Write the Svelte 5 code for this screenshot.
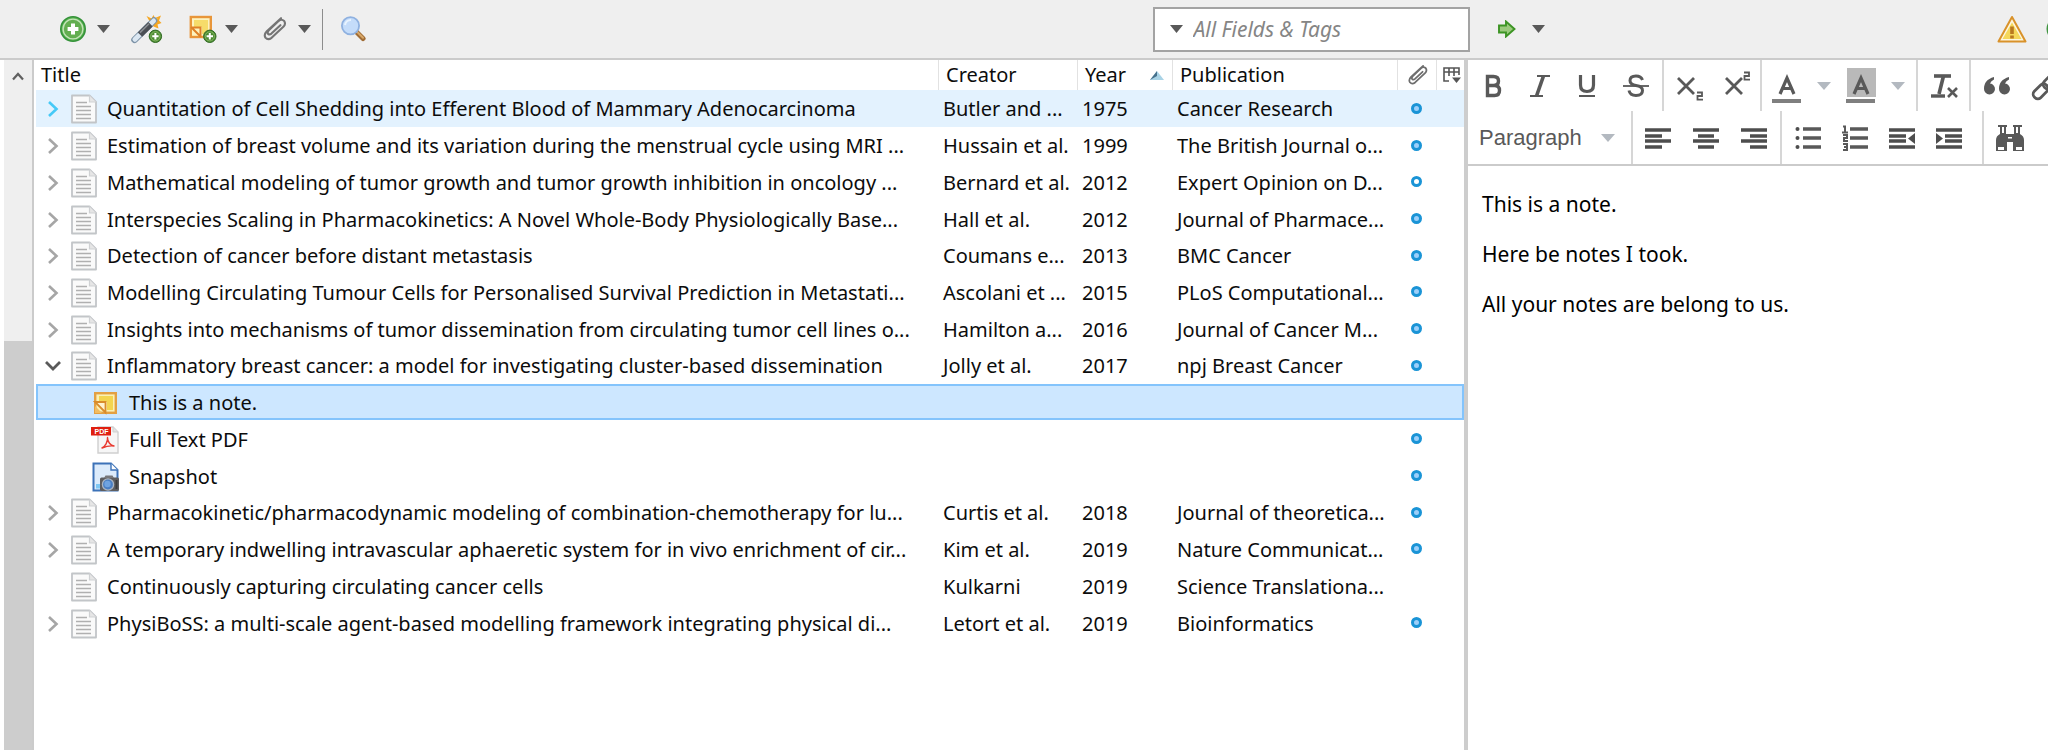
<script>
  const entries = [
    { title: 'Quantitation of Cell Shedding into Efferent Blood of Mammary Adenocarcinoma', creator: 'Butler and ...', year: '1975', pub: 'Cancer Research', kind: 'doc', twisty: 'closed', dot: 'full', state: 'hover' },
    { title: 'Estimation of breast volume and its variation during the menstrual cycle using MRI ...', creator: 'Hussain et al.', year: '1999', pub: 'The British Journal o...', kind: 'doc', twisty: 'closed', dot: 'full' },
    { title: 'Mathematical modeling of tumor growth and tumor growth inhibition in oncology ...', creator: 'Bernard et al.', year: '2012', pub: 'Expert Opinion on D...', kind: 'doc', twisty: 'closed', dot: 'empty' },
    { title: 'Interspecies Scaling in Pharmacokinetics: A Novel Whole-Body Physiologically Base...', creator: 'Hall et al.', year: '2012', pub: 'Journal of Pharmace...', kind: 'doc', twisty: 'closed', dot: 'full' },
    { title: 'Detection of cancer before distant metastasis', creator: 'Coumans e...', year: '2013', pub: 'BMC Cancer', kind: 'doc', twisty: 'closed', dot: 'full' },
    { title: 'Modelling Circulating Tumour Cells for Personalised Survival Prediction in Metastati...', creator: 'Ascolani et ...', year: '2015', pub: 'PLoS Computational...', kind: 'doc', twisty: 'closed', dot: 'full' },
    { title: 'Insights into mechanisms of tumor dissemination from circulating tumor cell lines o...', creator: 'Hamilton a...', year: '2016', pub: 'Journal of Cancer M...', kind: 'doc', twisty: 'closed', dot: 'full' },
    { title: 'Inflammatory breast cancer: a model for investigating cluster-based dissemination', creator: 'Jolly et al.', year: '2017', pub: 'npj Breast Cancer', kind: 'doc', twisty: 'open', dot: 'full' },
    { title: 'This is a note.', kind: 'note', state: 'selected' },
    { title: 'Full Text PDF', kind: 'pdf', dot: 'full' },
    { title: 'Snapshot', kind: 'snapshot', dot: 'full' },
    { title: 'Pharmacokinetic/pharmacodynamic modeling of combination-chemotherapy for lu...', creator: 'Curtis et al.', year: '2018', pub: 'Journal of theoretica...', kind: 'doc', twisty: 'closed', dot: 'full' },
    { title: 'A temporary indwelling intravascular aphaeretic system for in vivo enrichment of cir...', creator: 'Kim et al.', year: '2019', pub: 'Nature Communicat...', kind: 'doc', twisty: 'closed', dot: 'full' },
    { title: 'Continuously capturing circulating cancer cells', creator: 'Kulkarni', year: '2019', pub: 'Science Translationa...', kind: 'doc' },
    { title: 'PhysiBoSS: a multi-scale agent-based modelling framework integrating physical di...', creator: 'Letort et al.', year: '2019', pub: 'Bioinformatics', kind: 'doc', twisty: 'closed', dot: 'full' }
  ];
  let search = $state('');
</script>

{#snippet caret()}
  <svg class="caret" width="13" height="8" viewBox="0 0 12 8" preserveAspectRatio="none" aria-hidden="true"><path d="M0 0h12L6 8z" fill="currentColor" /></svg>
{/snippet}

{#snippet plusBadge(x, y)}
  <g transform="translate({x} {y})">
    <circle r="6.2" fill="#4d8a33" stroke="#2f6a22" stroke-width="1" />
    <circle r="4.6" fill="none" stroke="#82b862" stroke-width="1" />
    <path d="M-3.2 0h6.4M0 -3.2v6.4" stroke="#fff" stroke-width="2" />
  </g>
{/snippet}

{#snippet clip(color)}
  <g fill="none" stroke={color} stroke-width="2.1" stroke-linecap="round" stroke-linejoin="round">
    <path d="M19 2.2 L4.8 15.2 Q1.6 18.5 3.4 21.6 Q6 24.6 9.6 21.8 L21.6 10.6 Q24 7.8 22.2 5 Q19.6 2.6 16.8 4.8 L6.6 14.6 Q5 16.6 6.2 18 Q7.8 19 9.4 17.6 L18.4 9.2" />
  </g>
{/snippet}

<div class="app">
  <header class="toolbar">
    <div class="tools">
      <button class="tool add" aria-label="New Item">
        <svg width="28" height="28" viewBox="0 0 28 28">
          <circle cx="14" cy="14" r="12.2" fill="#5cb352" stroke="#35933a" stroke-width="1.6" />
          <circle cx="14" cy="14" r="9.9" fill="#63ae50" stroke="#c3e3b8" stroke-width="1.4" />
          <path d="M14 8.6v10.8M8.6 14h10.8" stroke="#fff" stroke-width="4" />
        </svg>
        {@render caret()}
      </button>
      <button class="tool wand" aria-label="Add Item by Identifier">
        <svg width="32" height="30" viewBox="0 0 32 30">
          <path d="M19 8l-3.500 -6 5 2.500 2-3.500 1.500 3 6-2.500-2 5 2.500 2.500-4 1.500 1 4-5-2z" fill="#f6a723" />
          <path d="M20.500 5l3 1 3-2-1 4-3 2z" fill="#ffe45c" />
          <path d="M3.500 25.800L23 6.500" stroke="#7e94a8" stroke-width="6.600" stroke-linecap="round" />
          <path d="M3.800 25.500L22.700 6.800" stroke="#dbe7f2" stroke-width="4.600" stroke-linecap="round" />
          <path d="M9 20.600L19.500 10.200" stroke="#4b4f55" stroke-width="6.200" />
          <path d="M9 18.600L18 9.700" stroke="#8b8f95" stroke-width="1.500" />
          {@render plusBadge(24.4, 22.3)}
        </svg>
      </button>
      <button class="tool note" aria-label="New Note">
        <svg width="28" height="28" viewBox="0 0 28 28">
          <rect x="1.800" y="2" width="20" height="20" fill="#fdf3bf" stroke="#e8963a" stroke-width="2.400" />
          <path d="M5 5h14v14h-6v-7H5z" fill="#f6dc6a" />
          <path d="M2 12l10 10M3 12.500h8.500V22" fill="none" stroke="#de8128" stroke-width="2" />
          {@render plusBadge(20.8, 21.3)}
        </svg>
        {@render caret()}
      </button>
      <button class="tool attach" aria-label="Add Attachment">
        <svg width="26" height="26" viewBox="0 0 26 26">{@render clip('#757575')}</svg>
        {@render caret()}
      </button>
      <span class="rule"></span>
      <button class="tool lens" aria-label="Advanced Search">
        <svg width="26" height="26" viewBox="0 0 26 26">
          <path d="M16.500 16l6.500 6.500" stroke="#a06c35" stroke-width="5" stroke-linecap="round" />
          <path d="M17 15.800l6 6" stroke="#d8a869" stroke-width="2" stroke-linecap="round" />
          <circle cx="10.500" cy="9.800" r="8.600" fill="#c4dcfa" stroke="#8fb1e0" stroke-width="1.800" />
          <path d="M5 9a6 6 0 0 1 6-5" fill="none" stroke="#e8f3ff" stroke-width="2" />
        </svg>
      </button>
    </div>
    <div class="search">
      <button aria-label="Search mode">{@render caret()}</button>
      <input type="text" placeholder="All Fields &amp; Tags" aria-label="All Fields &amp; Tags" bind:value={search} />
    </div>
    <button class="tool locate" aria-label="Locate">
      <svg width="18" height="18" viewBox="0 0 18 18"><path d="M1 5.500h7V1.500L16.500 9 8 16.500v-4H1z" fill="#9aca7c" stroke="#3c9424" stroke-width="1.900" /></svg>
      {@render caret()}
    </button>
    <div class="status">
      <button class="tool" aria-label="Sync warning">
        <svg width="30" height="28" viewBox="0 0 30 28">
          <path d="M15 2L28.500 26.500H1.500z" fill="#fdf6df" stroke="#d9922a" stroke-width="2" stroke-linejoin="round" />
          <path d="M15 7.500L24.500 24H5.500z" fill="#f5d75a" />
          <path d="M15 11.500v7.500M15 20.500v3" stroke="#b9781f" stroke-width="3.600" />
        </svg>
      </button>
      <button class="tool sync" aria-label="Sync">
        <svg width="26" height="26" viewBox="0 0 26 26"><circle cx="13" cy="13" r="10.500" fill="none" stroke="#3f9440" stroke-width="4" /></svg>
      </button>
    </div>
  </header>

  <main>
    <div class="scroll" aria-hidden="true">
      <svg width="12" height="10" viewBox="0 0 12 10"><path d="M1 8.500L6 3l5 5.500" fill="none" stroke="#606060" stroke-width="2.200" /></svg>
      <span class="thumb"></span>
    </div>

    <section class="items">
      <table>
        <colgroup><col /><col class="c-creator" /><col class="c-year" /><col class="c-pub" /><col class="c-att" /><col class="c-pick" /></colgroup>
        <thead>
          <tr>
            <th class="first">Title</th>
            <th>Creator</th>
            <th>
              <span class="sorted">Year
                <svg width="14" height="9" viewBox="0 0 14 9"><path d="M0 9L7 0l7 9z" fill="#a9d3e6" /><path d="M0 9L7 0v5z" fill="#47718c" /></svg>
              </span>
            </th>
            <th>Publication</th>
            <th class="icon" aria-label="Attachment"><svg width="22" height="22" viewBox="0 0 26 26">{@render clip('#6d6d6d')}</svg></th>
            <th class="icon" aria-label="Choose columns">
              <svg width="20" height="18" viewBox="0 0 20 18"><path d="M7 15H2V2h15v7M2 6h15M7 2v8M12 2v8" fill="none" stroke="#555" stroke-width="1.600" /><path d="M10 11.500h9L14.500 17z" fill="#555" /></svg>
            </th>
          </tr>
        </thead>
        <tbody>
          {#each entries as e}
            <tr class={e.state}>
              <td>
                <div class="title" class:child={e.kind !== 'doc'}>
                  {#if e.kind === 'doc'}
                    <span class="twisty">
                      {#if e.twisty === 'closed'}
                        <svg width="17" height="18" viewBox="0 0 17 18"><path d="M5 2l7.500 7L5 16" fill="none" stroke={e.state === 'hover' ? '#45c9f7' : '#a6a6a6'} stroke-width="2.600" /></svg>
                      {:else if e.twisty === 'open'}
                        <svg width="17" height="18" viewBox="0 0 17 18"><path d="M2 5l7 7 7-7" fill="none" stroke="#5a5a5a" stroke-width="2.800" /></svg>
                      {/if}
                    </span>
                    <svg class="kind" width="28" height="30" viewBox="0 0 28 30">
                      <path d="M2 1.500h17.500L26 8v20.500H2z" fill="#fafafa" stroke="#c2c5c8" stroke-width="1.800" stroke-linejoin="round" />
                      <path d="M19.500 1.500V8H26" fill="#e6e6e6" stroke="#cfd1d3" stroke-width="1.200" />
                      <path d="M6 8.500h11M6 12.500h15M6 16.500h15M6 20.500h15M6 24.500h15" stroke="#b0b0b0" stroke-width="1.600" />
                    </svg>
                  {:else if e.kind === 'note'}
                    <svg class="kind" width="28" height="30" viewBox="0 0 28 30">
                      <rect x="4.200" y="5.200" width="20.600" height="19.600" fill="#fbf0b4" stroke="#e3a043" stroke-width="2.400" />
                      <path d="M8 8h14v14h-6v-8H8z" fill="#f3d550" />
                      <path d="M4 14h10.500v10.500z" fill="#fff3cf" stroke="#d98c2b" stroke-width="1.800" />
                      <path d="M4 18v7h7z" fill="#f2bd62" />
                    </svg>
                  {:else if e.kind === 'pdf'}
                    <svg class="kind" width="28" height="30" viewBox="0 0 28 30">
                      <path d="M7 2h15l5 5v21H7z" fill="#f6f6f6" stroke="#cfcfcf" stroke-width="1.400" />
                      <path d="M22 2v5h5" fill="#e2e2e2" stroke="#cfcfcf" />
                      <rect x="0" y="2" width="20" height="8.500" fill="#e01f10" />
                      <text x="3.500" y="9" font-size="7" font-weight="700" fill="#fff">PDF</text>
                      <path d="M11 23c3-1.500 6-6 5.500-10.500 0 4.500 3 8 6.500 8.500-4-.5-8 .3-12 2z" fill="none" stroke="#e8392f" stroke-width="1.400" stroke-linejoin="round" />
                    </svg>
                  {:else}
                    <svg class="kind" width="28" height="30" viewBox="0 0 28 30">
                      <path d="M2.500 1.500H20L26.500 8v20.500h-24z" fill="#dcebfb" stroke="#3c72b8" stroke-width="2" />
                      <path d="M20 1.500V8h6.500" fill="#fff" stroke="#3c72b8" stroke-width="1.400" />
                      <rect x="5" y="22" width="4.500" height="4.500" fill="#7fc8f4" />
                      <rect x="9" y="15.500" width="19" height="13.500" rx="1.500" fill="#5e5e60" />
                      <path d="M13 16l1.500-2.500h7L23 16z" fill="#77777a" />
                      <circle cx="17" cy="22.500" r="5.600" fill="#4a7fc4" stroke="#a9b4c2" stroke-width="1.300" />
                      <circle cx="16.500" cy="22" r="3.200" fill="#6fa3e0" />
                      <path d="M25.500 18v9" stroke="#3c3c3c" stroke-width="2" />
                    </svg>
                  {/if}
                  <span>{e.title}</span>
                </div>
              </td>
              <td>{e.creator ?? ''}</td>
              <td>{e.year ?? ''}</td>
              <td>{e.pub ?? ''}</td>
              <td class="mark">{#if e.dot}<span class="dot {e.dot}"></span>{/if}</td>
              <td></td>
            </tr>
          {/each}
        </tbody>
      </table>
    </section>

    <section class="editor">
      <div class="format">
        <div class="line">
          <div class="group g1">
            <button aria-label="Bold"><svg width="24" height="28" viewBox="0 0 24 28"><path d="M6.500 4.500h6q5 0 5 4.500t-5 4.500h-6zM6.500 13.500h7q5 0 5 5t-5 5h-7z" fill="none" stroke="#595959" stroke-width="3.400" /></svg></button>
            <button aria-label="Italic"><svg width="24" height="28" viewBox="0 0 24 28"><path d="M9 4h13M2 24h13" stroke="#595959" stroke-width="2" /><path d="M15.500 4L8.500 24" stroke="#595959" stroke-width="3.600" /></svg></button>
            <button aria-label="Underline"><svg width="24" height="28" viewBox="0 0 24 28"><path d="M5.500 3v10q0 6.500 6.500 6.500t6.500-6.500V3" fill="none" stroke="#595959" stroke-width="3.200" /><path d="M4 24h16" stroke="#595959" stroke-width="2" /></svg></button>
            <button aria-label="Strikethrough"><svg width="28" height="28" viewBox="0 0 28 28"><path d="M20.500 8q-1.500-4-6.500-4-6 0-6 4.500 0 4 6 5 6.500 1 6.500 5 0 5-6.500 5-6 0-7-5" fill="none" stroke="#595959" stroke-width="3" /><path d="M1 14h26" stroke="#595959" stroke-width="1.800" /></svg></button>
          </div>
          <div class="group g2">
            <button aria-label="Subscript"><svg width="28" height="30" viewBox="0 0 28 30"><path d="M2 7l16 16M18 7L2 23" stroke="#595959" stroke-width="2.800" /><path d="M21 21.500h5v3.500h-4.500v3.700H27" fill="none" stroke="#595959" stroke-width="1.800" /></svg></button>
            <button aria-label="Superscript"><svg width="28" height="30" viewBox="0 0 28 30"><path d="M2 7l16 16M18 7L2 23" stroke="#595959" stroke-width="2.800" /><path d="M20 1.500h5v3.500h-4.500v3.700H26" fill="none" stroke="#595959" stroke-width="1.800" /></svg></button>
          </div>
          <div class="group g3">
            <button aria-label="Text color"><svg width="30" height="36" viewBox="0 0 30 36"><path d="M8 26L15 10l7 16M10.500 20.500h9" fill="none" stroke="#595959" stroke-width="3.200" /><rect x="0" y="31" width="29" height="4" fill="#7f7f7f" /></svg></button>
            <button class="drop" aria-label="Text color options">{@render caret()}</button>
            <button aria-label="Background color"><svg width="30" height="36" viewBox="0 0 30 36"><rect x="1" width="29" height="29" fill="#b9b9b9" /><path d="M8 26L15 10l7 16M10.500 20.500h9" fill="none" stroke="#595959" stroke-width="3.200" /><rect x="0" y="31" width="29" height="4" fill="#7f7f7f" /></svg></button>
            <button class="drop" aria-label="Background color options">{@render caret()}</button>
          </div>
          <div class="group g4">
            <button aria-label="Clear formatting"><svg width="28" height="28" viewBox="0 0 28 28"><path d="M4 4h17" stroke="#595959" stroke-width="3.600" /><path d="M13.500 4L9 22" stroke="#595959" stroke-width="3.600" /><path d="M1 24h14" stroke="#595959" stroke-width="3.400" /><path d="M18 16l9 9M27 16l-9 9" stroke="#595959" stroke-width="2.600" /></svg></button>
          </div>
          <div class="group g5">
            <button aria-label="Blockquote"><svg width="28" height="24" viewBox="0 0 28 24"><path d="M11 3C4 5 1 9 1 15a5.500 5.500 0 1 0 6-5.500Q8 7 11 5.500zM26 3c-7 2-10 6-10 12a5.500 5.500 0 1 0 6-5.500Q23 7 26 5.500z" fill="#595959" /></svg></button>
            <button aria-label="Link"><svg width="30" height="30" viewBox="0 0 30 30"><g fill="none" stroke="#595959" stroke-width="2.800" transform="rotate(-45 15 15)"><rect x="-1" y="10.500" width="17" height="9" rx="4" /><rect x="13" y="10.500" width="17" height="9" rx="4" /></g></svg></button>
          </div>
        </div>
        <div class="line second">
          <div class="group h1">
            <button class="para">Paragraph {@render caret()}</button>
          </div>
          <div class="group h2">
            <button aria-label="Align left"><svg width="26" height="22" viewBox="0 0 26 22"><path d="M0 3h26M0 9h17M0 14h26M0 20h17" stroke="#4d4d4d" stroke-width="3.600" /></svg></button>
            <button aria-label="Align center"><svg width="26" height="22" viewBox="0 0 26 22"><path d="M0 3h26M5 9h16M0 14h26M5 20h16" stroke="#4d4d4d" stroke-width="3.600" /></svg></button>
            <button aria-label="Align right"><svg width="26" height="22" viewBox="0 0 26 22"><path d="M0 3h26M9 9h17M0 14h26M9 20h17" stroke="#4d4d4d" stroke-width="3.600" /></svg></button>
          </div>
          <div class="group h3">
            <button aria-label="Bullet list"><svg width="26" height="26" viewBox="0 0 26 26"><path d="M8 4h18M8 13h18M8 22h18" stroke="#595959" stroke-width="3.400" /><g fill="#4d4d4d"><circle cx="2.500" cy="4" r="2" /><circle cx="2.500" cy="13" r="2" /><circle cx="2.500" cy="22" r="2" /></g></svg></button>
            <button aria-label="Numbered list"><svg width="26" height="26" viewBox="0 0 26 26"><path d="M8 4h18M8 13h18M8 22h18" stroke="#595959" stroke-width="3.400" /><path d="M1 1.500h2v6M0 7.500h6M1 10h4v3H2v3h4M1 19h4v6H1M2 22h3" fill="none" stroke="#595959" stroke-width="2" /></svg></button>
            <button aria-label="Decrease indent"><svg width="26" height="22" viewBox="0 0 26 22"><path d="M0 3h26M0 9h17M0 14h17M0 20h26" stroke="#4d4d4d" stroke-width="3.600" /><path d="M26 6v11l-7-5.500z" fill="#4d4d4d" /></svg></button>
            <button aria-label="Increase indent"><svg width="26" height="22" viewBox="0 0 26 22"><path d="M0 3h26M9 9h17M9 14h17M0 20h26" stroke="#4d4d4d" stroke-width="3.600" /><path d="M0 6v11l7-5.500z" fill="#4d4d4d" /></svg></button>
          </div>
          <div class="group h4">
            <button aria-label="Find and replace"><svg width="28" height="26" viewBox="0 0 28 26"><path d="M2 0h9v2h-1v7h8V2h-1V0h9v2h-2v7q4 2 4 6v11H17v-9h-6v9H0V15q0-4 4-6V2H2z" fill="#595959" /><path d="M2 22h6v3H2zM20 22h6v3h-6zM6 2h2v6H6zM20 2h2v6h-2zM12 12h4v1.500h-4z" fill="#fff" /></svg></button>
          </div>
        </div>
      </div>
      <article>
        <p>This is a note.</p>
        <p>Here be notes I took.</p>
        <p>All your notes are belong to us.</p>
      </article>
    </section>
  </main>
</div>

<style>
  :global(body) { margin: 0; background: #fff; }
  .app { display: flex; flex-direction: column; min-height: 100vh; font-family: 'Noto Sans', 'Open Sans', sans-serif; font-size: 20px; color: #0c0c0c; overflow: hidden; }
  button { display: flex; align-items: center; justify-content: center; border: 0; padding: 0; background: none; font: inherit; color: inherit; flex: none; }
  svg { display: block; flex: none; }
  .toolbar { display: flex; align-items: center; height: 58px; background: #efefef; border-bottom: 2px solid #cbcbcb; color: #595959; }
  .tools { flex: 1095; min-width: 0; display: flex; align-items: center; padding-left: 59px; box-sizing: border-box; }
  .tool { gap: 10px; }
  .wand { margin-left: 21px; }
  .note { margin-left: 26px; gap: 8px; }
  .attach { margin-left: 24px; }
  .rule { width: 1px; height: 41px; margin: 0 17px 0 11px; background: #8d8d8d; }
  .search { flex: 298; min-width: 0; display: flex; align-items: center; box-sizing: border-box; height: 45px; border: 2px solid #a3a3a3; background: #fff; padding-left: 15px; gap: 10px; }
  .search input { flex: 1; min-width: 0; border: 0; outline: 0; padding: 0; background: none; font: italic 21px 'Noto Sans', 'Open Sans', sans-serif; }
  .search input::placeholder { color: #858585; opacity: 1; }
  .locate { margin-left: 28px; gap: 16px; }
  .status { flex: 527; display: flex; justify-content: flex-end; gap: 19px; margin-right: -24px; }
  main { flex: 1; display: flex; }
  .scroll { width: 28px; margin-left: 4px; display: flex; flex-direction: column; align-items: center; background: #efefef; padding-top: 11px; gap: 260px; }
  .scroll .thumb { flex: 1; align-self: stretch; background: #cdcdcd; }
  .items { flex: 1428; min-width: 0; border-left: 2px solid #cbcbcb; padding-left: 2px; }
  table { width: 100%; height: 581px; table-layout: fixed; border-collapse: separate; border-spacing: 0; }
  .c-creator { width: 139px; } .c-year { width: 95px; } .c-pub { width: 225px; } .c-att { width: 39px; } .c-pick { width: 28px; }
  th { height: 30px; padding: 0 0 0 7px; border-left: 1px solid #e2e2e2; font-weight: 400; text-align: left; line-height: 30px; }
  th.first { border-left: 0; padding-left: 5px; }
  th.icon { padding: 0 0 0 2px; }
  th.icon svg { margin: 0 auto; }
  .sorted { display: flex; align-items: center; justify-content: space-between; padding-right: 8px; }
  td { padding: 2px 0 0 5px; white-space: nowrap; overflow: hidden; line-height: 28px; border: solid transparent; border-width: 2px 0; }
  td:first-child { padding-left: 8px; }
  .hover td { background: #e3f2fe; border-color: #e3f2fe; }
  .selected td { background: #cde7ff; border-color: #84c4fc; }
  .selected td:first-child { border-left: 2px solid #84c4fc; padding-left: 6px; }
  .selected td:last-child { border-right: 2px solid #84c4fc; }
  .title { display: flex; align-items: center; }
  .twisty { width: 17px; height: 18px; margin-right: 9px; }
  .child { padding-left: 47px; }
  .kind { margin-right: 9px; font-family: 'Liberation Sans', sans-serif; }
  .child .kind { margin-right: 10px; }
  td.mark { padding: 0; }
  .dot { display: block; width: 5px; height: 5px; margin: 0 auto; border: 3px solid #1a94d6; border-radius: 50%; background: #9ccffa; }
  .dot.empty { background: #fff; }
  .editor { flex: 580; min-width: 0; border-left: 4px solid #cdcdcd; overflow: hidden; }
  .format { border-bottom: 2px solid #cbcbcb; color: #595959; overflow: hidden; }
  .line { display: flex; height: 51px; }
  .second { height: 53px; }
  .group { display: flex; align-items: center; box-sizing: border-box; flex: none; border-right: 2px solid #d6d6d6; }
  .g1 { width: 196px; padding-left: 13px; gap: 23px; }
  .g2 { width: 98px; padding-left: 12px; gap: 20px; }
  .g3 { width: 156px; padding-left: 10px; gap: 15px; }
  .drop .caret, .para .caret { width: 14px; color: #b3b9c0; }
  .g4 { width: 53px; padding-left: 12px; }
  .g5 { padding-left: 12px; gap: 20px; border: 0; }
  .h1 { width: 165px; padding-left: 11px; }
  .para { gap: 19px; font: 22px 'Liberation Sans', Arial, sans-serif; }
  .h2 { width: 149px; padding-left: 12px; gap: 22px; }
  .h3 { width: 202px; padding-left: 13px; gap: 21px; }
  .h3::after { content: ''; align-self: flex-start; width: 2px; height: 7px; margin: 0 3px 0 auto; background: #dcdcdc; }
  .h4 { padding-left: 12px; border: 0; }
  article { padding: 23px 14px; font: 21px/30px 'Noto Sans', sans-serif; color: #000; }
  article p { margin: 0 0 20px; }
</style>
